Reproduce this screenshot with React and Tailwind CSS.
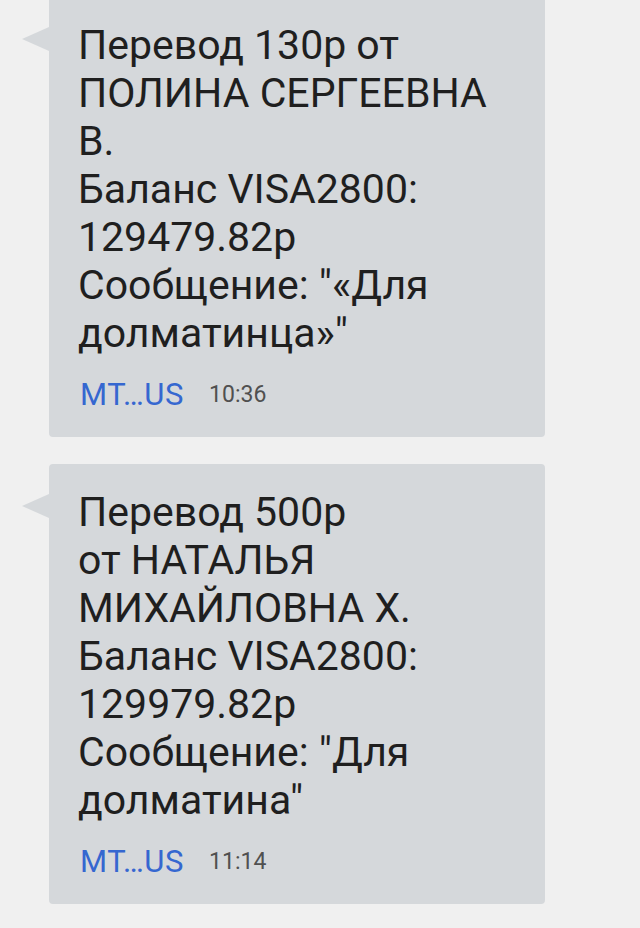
import React from "react";

const messages = [
  {
    lines: [
      "Перевод 130р от",
      "ПОЛИНА СЕРГЕЕВНА",
      "В.",
      "Баланс VISA2800:",
      "129479.82р",
      "Сообщение: \"«Для",
      "долматинца»\"",
    ],
    time: "10:36",
  },
  {
    lines: [
      "Перевод 500р",
      "от НАТАЛЬЯ",
      "МИХАЙЛОВНА Х.",
      "Баланс VISA2800:",
      "129979.82р",
      "Сообщение: \"Для",
      "долматина\"",
    ],
    time: "11:14",
  },
];

function Bubble({ lines, time }) {
  return (
    <div className="relative w-[496px] rounded-[4px] bg-[#d5d8db] pl-[29px] pt-6 pb-6">
      <div className="absolute left-[-27px] top-[30px] h-0 w-0 border-y-[12.5px] border-r-[27px] border-y-transparent border-r-[#d5d8db]" />
      <div className="text-[41px] leading-[48px] text-[#1f1f1f]">
        {lines.map((l, i) => (
          <div key={i} className="whitespace-nowrap">
            {l}
          </div>
        ))}
      </div>
      <div className="ml-[2px] mt-5 flex h-9 items-center gap-[25px]">
        <span className="text-[31px] leading-9 tracking-[0.6px] text-[#3567d0]">MT…US</span>
        <span className="text-[23px] leading-9 text-[#505050]">{time}</span>
      </div>
    </div>
  );
}

export default function App() {
  return (
    <div
      className="h-[928px] w-[640px] overflow-hidden bg-[#f0f0f0]"
      style={{ fontFamily: "Roboto, 'Noto Sans', sans-serif" }}
    >
      <div className="-mt-[3px] flex flex-col gap-[27px] pl-[49px]">
        {messages.map((m, i) => (
          <Bubble key={i} {...m} />
        ))}
      </div>
    </div>
  );
}
